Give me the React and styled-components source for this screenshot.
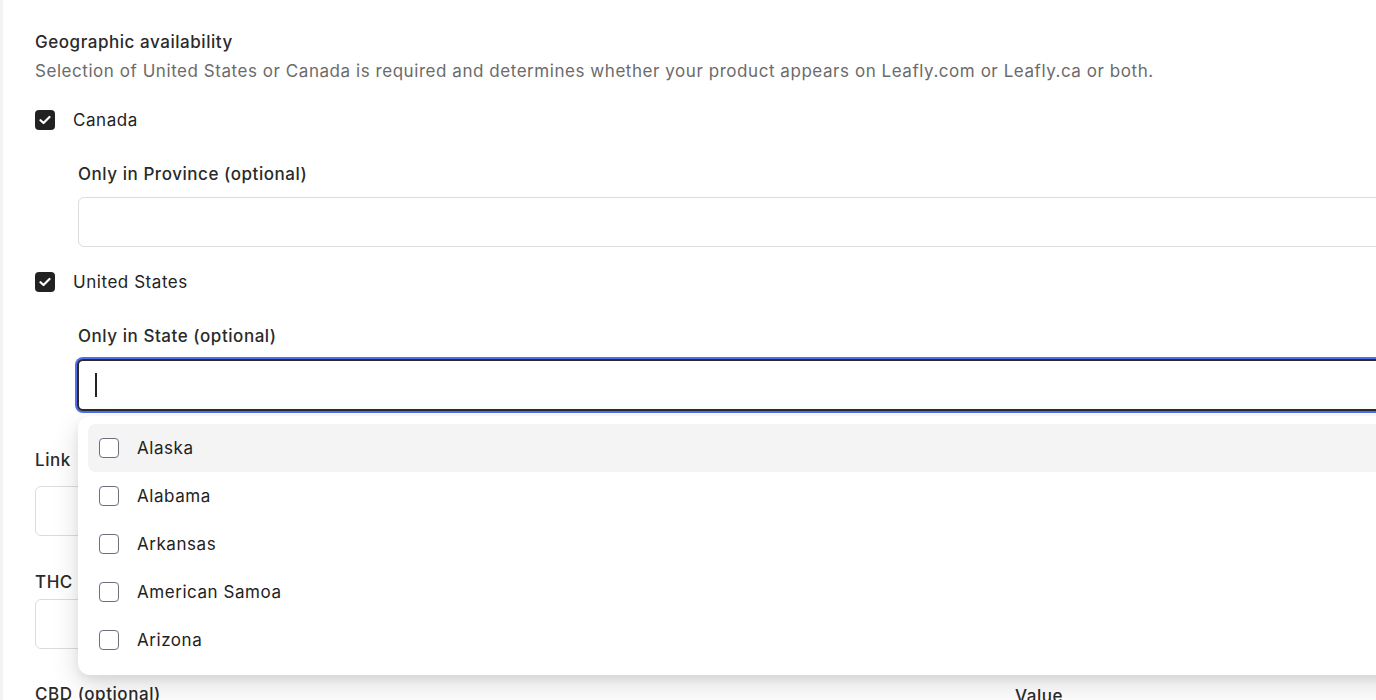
import React from 'react';
import styled, { createGlobalStyle } from 'styled-components';

const GlobalStyle = createGlobalStyle`
  html, body {
    margin: 0;
    padding: 0;
    background: #f3f3f3;
    overflow: hidden;
  }
  body {
    font-family: Inter, "Noto Sans", Arial, sans-serif;
    letter-spacing: 0.55px;
    color: #222;
  }
`;

const Card = styled.div`
  margin-left: 3px;
  width: 1900px;
  min-height: 700px;
  background: #fff;
  padding: 30px 32px 0;
  box-sizing: border-box;
`;

const Title = styled.div`
  font-size: 17px;
  line-height: 24px;
  font-weight: 500;
  color: #2a2a2a;
`;

const Helper = styled.div`
  margin-top: 5px;
  font-size: 17px;
  line-height: 24px;
  color: #6b6b6b;
`;

const CheckRow = styled.label`
  display: flex;
  align-items: center;
  gap: 18px;
  margin-top: ${(p) => p.$top}px;
  font-size: 17px;
  line-height: 24px;
`;

const Box = styled.span`
  width: 20px;
  height: 20px;
  box-sizing: border-box;
  border-radius: 4px;
  flex: none;
  display: flex;
  align-items: center;
  justify-content: center;
  background: ${(p) => (p.$checked ? '#222' : '#fff')};
  border: ${(p) => (p.$checked ? 'none' : '1.5px solid #6b6f7b')};
`;

const Nested = styled.div`
  padding-left: 43px;
  margin-top: ${(p) => p.$top}px;
`;

const FieldLabel = styled.div`
  font-size: 17px;
  line-height: 24px;
  font-weight: 500;
  color: #2a2a2a;
  margin-top: ${(p) => p.$top || 0}px;
`;

const InputWrap = styled.div`
  position: relative;
  margin-top: ${(p) => p.$gap}px;
`;

const Input = styled.div`
  height: 50px;
  box-sizing: border-box;
  border: 1px solid #dcdcdc;
  border-radius: 6px;
  background: #fff;
  ${(p) =>
    p.$focused &&
    `
    margin: -1px 0 -1px -1px;
    height: 52px;
    border: 2px solid #2a2a2a;
    box-shadow: 0 0 0 2px #4f6ef0;
    display: flex;
    align-items: center;
    padding-left: 16px;
  `}
`;

const Caret = styled.span`
  width: 2px;
  height: 24px;
  background: #222;
`;

const Dropdown = styled.div`
  position: absolute;
  top: 57px;
  left: 0;
  right: 0;
  background: #fff;
  border-radius: 12px;
  padding: 8px 10px 11px;
  box-shadow: 0 4px 8px rgba(0, 0, 0, 0.06), 0 10px 28px rgba(0, 0, 0, 0.14);
  z-index: 2;
`;

const Option = styled.div`
  height: 48px;
  display: flex;
  align-items: center;
  gap: 18px;
  padding-left: 11px;
  border-radius: 8px;
  font-size: 17px;
  background: ${(p) => (p.$active ? '#f4f4f4' : 'transparent')};
`;

const Split = styled.div`
  display: grid;
  grid-template-columns: 960px 1fr;
  column-gap: 20px;
  margin-top: ${(p) => p.$top}px;
`;

const Check = () => (
  <svg width="12" height="10" viewBox="0 0 12 10">
    <path d="M1.5 5.2 4.5 8 10.5 2" fill="none" stroke="#fff" strokeWidth="2.2" strokeLinecap="round" strokeLinejoin="round" />
  </svg>
);

const states = ['Alaska', 'Alabama', 'Arkansas', 'American Samoa', 'Arizona'];

export default function App() {
  return (
    <>
      <GlobalStyle />
      <Card>
        <Title>Geographic availability</Title>
        <Helper>
          Selection of United States or Canada is required and determines whether your product appears on Leafly.com or Leafly.ca or both.
        </Helper>

        <CheckRow $top={25}>
          <Box $checked>
            <Check />
          </Box>
          Canada
        </CheckRow>
        <Nested $top={30}>
          <FieldLabel>Only in Province (optional)</FieldLabel>
          <InputWrap $gap={11}>
            <Input />
          </InputWrap>
        </Nested>

        <CheckRow $top={23}>
          <Box $checked>
            <Check />
          </Box>
          United States
        </CheckRow>
        <Nested $top={30}>
          <FieldLabel>Only in State (optional)</FieldLabel>
          <InputWrap $gap={12}>
            <Input $focused>
              <Caret />
            </Input>
            <Dropdown>
              {states.map((s, i) => (
                <Option key={s} $active={i === 0}>
                  <Box />
                  {s}
                </Option>
              ))}
            </Dropdown>
          </InputWrap>
        </Nested>

        <FieldLabel $top={38}>Link</FieldLabel>
        <InputWrap $gap={14}>
          <Input />
        </InputWrap>

        <Split $top={34}>
          <div>
            <FieldLabel>THC</FieldLabel>
            <InputWrap $gap={5}>
              <Input />
            </InputWrap>
          </div>
          <div />
        </Split>

        <Split $top={33}>
          <FieldLabel>CBD (optional)</FieldLabel>
          <FieldLabel $top={2}>Value</FieldLabel>
        </Split>
      </Card>
    </>
  );
}
